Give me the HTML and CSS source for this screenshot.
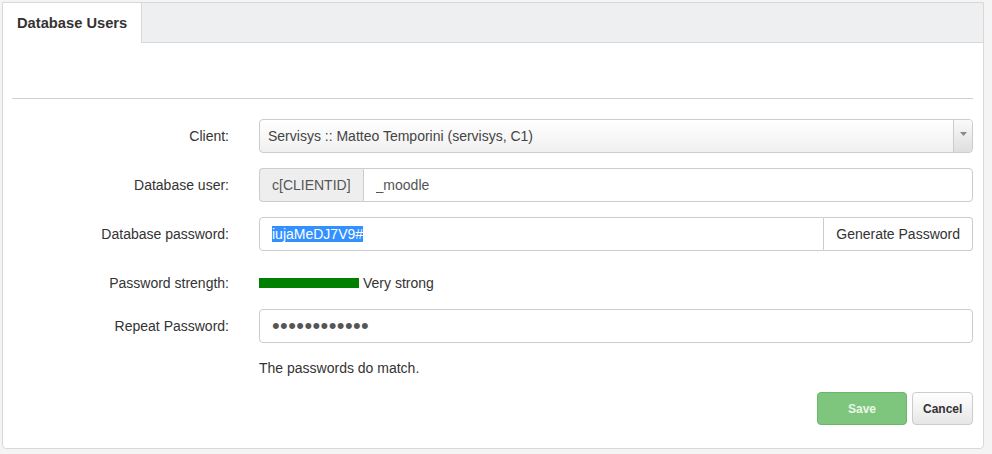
FILE: index.html
```html
<!DOCTYPE html>
<html lang="en">
<head>
    <meta charset="UTF-8">
    <title>Database Users</title>
    <link rel="stylesheet" href="styles.css">
</head>
<body>
    <div class="panel">
        <div class="tabs">
            <div class="tab active">Database Users</div>
            <div class="tab-fill"></div>
        </div>
        <div class="panel-body">
            <hr>
            <form class="form">
                <div class="row">
                    <label>Client:</label>
                    <div class="select">
                        <span class="select-text">Servisys :: Matteo Temporini (servisys, C1)</span>
                        <span class="select-arrow"><svg width="7" height="4" viewBox="0 0 7 4"><path d="M0 0h7L3.5 4z" fill="#888"/></svg></span>
                    </div>
                </div>
                <div class="row">
                    <label>Database user:</label>
                    <div class="group">
                        <span class="addon">c[CLIENTID]</span>
                        <input class="control" type="text" value="_moodle">
                    </div>
                </div>
                <div class="row">
                    <label>Database password:</label>
                    <div class="group">
                        <div class="control selected-box"><span class="sel">iujaMeDJ7V9#</span></div>
                        <button type="button" class="btn-addon">Generate Password</button>
                    </div>
                </div>
                <div class="row row-strength">
                    <label>Password strength:</label>
                    <div class="strength">
                        <span class="bar"></span>
                        <span>Very strong</span>
                    </div>
                </div>
                <div class="row">
                    <label>Repeat Password:</label>
                    <input class="control password" type="password" value="iujaMeDJ7V9#">
                </div>
                <div class="row row-help">
                    <label></label>
                    <p class="help">The passwords do match.</p>
                </div>
                <div class="actions">
                    <button type="button" class="btn btn-save" disabled>Save</button>
                    <button type="button" class="btn btn-cancel">Cancel</button>
                </div>
            </form>
        </div>
    </div>
</body>
</html>
```

FILE: styles.css
```css
body {
    margin: 0;
    padding: 2px 8px 0 2px;
    background: #f4f4f4;
    font-family: 'Liberation Sans', Arial, sans-serif;
    font-size: 14px;
    color: #333;
}

.panel {
    background: #fff;
    border: 1px solid #d8d8d8;
    border-radius: 0 0 4px 4px;
    height: 447px;
    box-sizing: border-box;
}

.tabs {
    display: flex;
    height: 40px;
}

.tab {
    padding: 0 14px;
    line-height: 40px;
    font-size: 14.7px;
    font-weight: bold;
    color: #333;
    background: #fff;
    border-right: 1px solid #d8d8d8;
}

.tab-fill {
    flex: 1;
    background: #eeeff0;
    border-bottom: 1px solid #d8d8d8;
}

.panel-body {
    padding: 0 10px 0 9px;
}

hr {
    margin: 55px 0 20px 0;
    border: 0;
    border-top: 1px solid #d0d0d0;
}

.row {
    display: flex;
    align-items: center;
    margin-bottom: 15px;
}

.row label {
    width: 217px;
    flex: none;
    text-align: right;
    padding-right: 30px;
    color: #333;
}

.control {
    flex: 1;
    height: 34px;
    box-sizing: border-box;
    padding: 6px 12px;
    border: 1px solid #ccc;
    border-radius: 4px;
    font-family: inherit;
    font-size: 14px;
    color: #555;
    background: #fff;
    margin: 0;
}

.password {
    font-size: 22px;
    letter-spacing: 0.4px;
    padding: 0 12px;
}

.select {
    flex: 1;
    display: flex;
    height: 34px;
    box-sizing: border-box;
    border: 1px solid #ccc;
    border-radius: 4px;
    background: linear-gradient(#fff, #f0f0f0);
    color: #444;
}

.select-text {
    flex: 1;
    line-height: 32px;
    padding-left: 8px;
}

.select-arrow {
    width: 19px;
    border-left: 1px solid #ccc;
    border-radius: 0 3px 3px 0;
    background: linear-gradient(#fafafa, #dedede);
    display: flex;
    align-items: center;
    justify-content: center;
    padding-bottom: 4px;
    box-sizing: border-box;
}

.group {
    flex: 1;
    display: flex;
}

.addon {
    height: 34px;
    box-sizing: border-box;
    padding: 0 12px;
    line-height: 32px;
    color: #555;
    background: #eee;
    border: 1px solid #ccc;
    border-right: 0;
    border-radius: 4px 0 0 4px;
}

.group .addon + .control {
    border-radius: 0 4px 4px 0;
}

.selected-box {
    border-radius: 4px 0 0 4px;
    line-height: 20px;
}

.sel {
    background: #3390ff;
    color: #fff;
}

.btn-addon {
    height: 34px;
    padding: 0 12px;
    border: 1px solid #ccc;
    border-left: 0;
    border-radius: 0 4px 4px 0;
    background: #fff;
    font-family: inherit;
    font-size: 14px;
    color: #333;
}

.row-strength {
    height: 28px;
    padding-top: 3px;
    margin-bottom: 12px;
}

.strength {
    display: flex;
    align-items: center;
    gap: 4px;
    color: #333;
}

.bar {
    display: inline-block;
    width: 100px;
    height: 10px;
    background: #008000;
}

.row-help {
    margin-bottom: 16px;
}

.help {
    margin: 0;
    color: #333;
    padding-top: 2px;
}

.actions {
    display: flex;
    justify-content: flex-end;
    gap: 5px;
}

.btn {
    height: 33px;
    font-family: inherit;
    font-size: 12px;
    font-weight: bold;
    border-radius: 4px;
    padding: 0 10px;
}

.btn-save {
    width: 90px;
    background: #7ec67e;
    border: 1px solid #6ab66a;
    color: #eaf7ea;
}

.btn-cancel {
    width: 61px;
    background: linear-gradient(#fff, #e6e6e6);
    border: 1px solid #ccc;
    color: #333;
}
```
